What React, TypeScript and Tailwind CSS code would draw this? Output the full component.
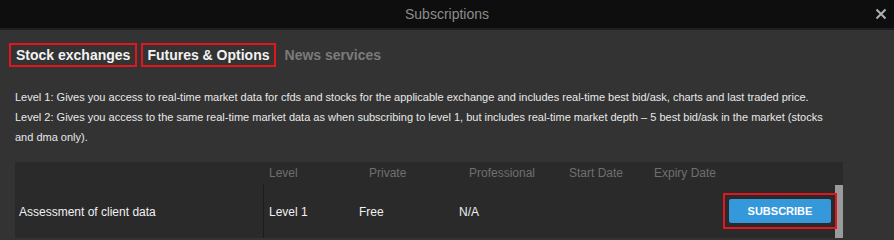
import React from "react";

const headers = [
  { label: "Level", w: "w-[100px]" },
  { label: "Private", w: "w-[100px]" },
  { label: "Professional", w: "w-[100px]" },
  { label: "Start Date", w: "w-[85px]" },
  { label: "Expiry Date", w: "w-[100px]" },
];

export default function App() {
  return (
    <div className="w-[894px] h-[240px] overflow-hidden bg-[#333333] font-['Liberation_Sans',Arial,sans-serif]">
      {/* title bar */}
      <div className="relative h-[30px] bg-[#0e0e0e] border-b-2 border-[#1f1f1f] flex items-center justify-center">
        <span className="text-[14px] text-[#8c8c8c]">Subscriptions</span>
        <button className="absolute right-[7px] top-[8px] text-[#a9b1ba]">
          <svg width="12" height="12" viewBox="0 0 12 12">
            <path d="M1.5 1.5 L10.5 10.5 M10.5 1.5 L1.5 10.5" stroke="currentColor" strokeWidth="2" />
          </svg>
        </button>
      </div>

      {/* tabs */}
      <div className="flex items-center pl-[9px] pt-[13px] gap-[4px]">
        <div className="border-2 border-[#e3161f] h-[24px] px-[5px] flex items-center">
          <span className="text-[14px] font-bold text-[#f2f2f2]">Stock exchanges</span>
        </div>
        <div className="border-2 border-[#e3161f] h-[24px] px-[4px] flex items-center">
          <span className="text-[14px] font-bold text-[#f2f2f2]">Futures &amp; Options</span>
        </div>
        <span className="text-[14px] font-bold text-[#7b7b7b] ml-[5px]">News services</span>
      </div>

      {/* description */}
      <div className="pl-[15px] pt-[20px] w-[843px] text-[11px] leading-[20px] text-[#e8e8e8]">
        <p>
          Level 1: Gives you access to real-time market data for cfds and stocks for the applicable exchange and
          includes real-time best bid/ask, charts and last traded price.
        </p>
        <p>
          Level 2: Gives you access to the same real-time market data as when subscribing to level 1, but includes
          real-time market depth – 5 best bid/ask in the market (stocks and dma only).
        </p>
      </div>

      {/* table */}
      <div className="ml-[15px] mt-[15px] w-[828px] bg-[#2a2a2a]">
        <div className="flex h-[22px] items-center text-[12px] text-[#6f6f6f]">
          <div className="w-[249px]" />
          {headers.map((h) => (
            <div key={h.label} className={`${h.w} pl-[5px]`}>
              {h.label}
            </div>
          ))}
        </div>
        <div className="flex h-[54px] text-[12px] text-[#f0f0f0]">
          <div className="w-[249px] border-r border-[#1c1c1c] pt-[19px] pl-[4px]">Assessment of client data</div>
          <div className="w-[90px] pt-[19px] pl-[5px]">Level 1</div>
          <div className="w-[100px] pt-[19px] pl-[5px]">Free</div>
          <div className="w-[100px] pt-[19px] pl-[5px]">N/A</div>
          <div className="flex-1 flex items-start justify-end pr-[4px] pt-[15px]">
            <div className="relative">
              <button className="block w-[102px] h-[24px] rounded-[2px] bg-[#3498db] text-white text-[11px] font-bold">
                SUBSCRIBE
              </button>
              <div className="absolute -inset-[6px] border-2 border-[#e3161f]" />
            </div>
          </div>
          <div className="w-[8px] bg-[#9b9b9b] mt-[1px]" />
        </div>
      </div>
    </div>
  );
}
